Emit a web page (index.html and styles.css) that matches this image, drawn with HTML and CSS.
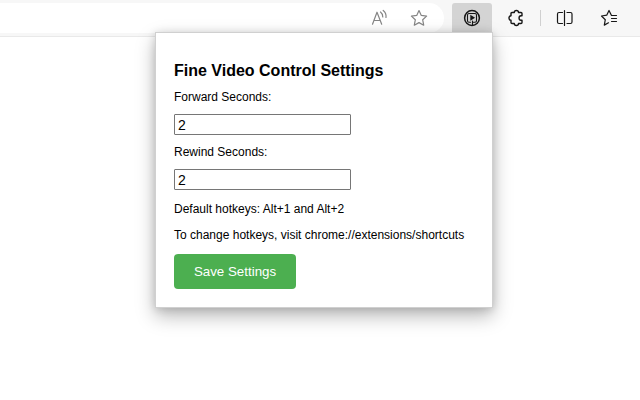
FILE: index.html
```
<!DOCTYPE html>
<html lang="en">
<head>
<meta charset="utf-8">
<title>Fine Video Control Settings</title>
<link rel="stylesheet" href="styles.css">
</head>
<body>
<header class="toolbar">
  <div class="address">
    <svg class="icon muted" width="20" height="20" viewBox="0 0 20 20"><path d="M3.500 16.200 8 4.200l4.700 12M5 12.500h6.200M11.500 4q2.300 1.700 2.300 5M14.200 2.500q3.300 2.700 2.800 7"/></svg>
    <svg class="icon muted" width="20" height="20" viewBox="0 0 20 20"><path d="m10 2.500 2.300 4.900 5.300.7-3.900 3.700 1 5.400-4.700-2.600-4.700 2.600 1-5.400-3.900-3.700 5.300-.7z"/></svg>
  </div>
  <div class="extension">
    <svg class="icon player" width="20" height="20" viewBox="0 0 20 20"><circle cx="10" cy="10" r="7.400"/><path class="thin" d="M8.500 14.200H7q-1.500 0-1.500-1.500V7q0-1.500 1.500-1.500h6q1.500 0 1.500 1.500v5.700q0 1.500-1.500 1.500h-1.500M10.500 13v3.500"/><path class="solid" d="m8.300 6.800 4.800 3-4.800 3z"/></svg>
  </div>
  <nav class="actions">
    <svg class="icon puzzle" width="20" height="20" viewBox="0 0 20 20"><path d="M6 4.500h2.300c0-2.700 4.200-2.700 4.200 0H15q1 0 1 1v2.300h-1c-2.600 0-2.600 4.400 0 4.400h1v2.300q0 1-1 1h-2.500c0 2.700-4.200 2.700-4.200 0H6q-1 0-1-1v-2.300c-2.700 0-2.700-4.400 0-4.400V5.500q0-1 1-1z"/></svg>
    <span class="divider"></span>
    <svg class="icon" width="20" height="20" viewBox="0 0 20 20"><path d="M7.500 4.500H4q-1.500 0-1.500 1.500v8q0 1.500 1.500 1.500h3.500M12 4.500h3.500q1.500 0 1.500 1.500v8q0 1.500-1.500 1.500H12M9.500 2.500v15"/></svg>
    <svg class="icon" width="20" height="20" viewBox="0 0 20 20"><path d="M17.500 7.500h-5L10 2.500 7.700 7.200l-5.200.8 3.800 3.700-1 5.400 4.200-2.300M12.500 10.500h5M12.500 13.500h5"/></svg>
  </nav>
</header>
<main class="popup">
  <h1 class="title">Fine Video Control Settings</h1>
  <label class="label" for="forward">Forward Seconds:</label>
  <input class="field" id="forward" type="text" value="2">
  <label class="label" for="rewind">Rewind Seconds:</label>
  <input class="field" id="rewind" type="text" value="2">
  <p class="note">Default hotkeys: Alt+1 and Alt+2</p>
  <p class="note">To change hotkeys, visit chrome://extensions/shortcuts</p>
  <button class="save">Save Settings</button>
</main>
</body>
</html>
```
FILE: styles.css
```
* { box-sizing: border-box; }
body {
  margin: 0;
  height: 400px;
  overflow: hidden;
  background: #fff;
  color: #000;
  font-family: "Liberation Sans", Arial, sans-serif;
  font-size: 12px;
}
.toolbar {
  display: flex;
  height: 37px;
  padding-top: 3px;
  background: #f7f7f7;
  border-bottom: 1px solid #e9e9e9;
}
.address {
  display: flex;
  justify-content: flex-end;
  align-items: center;
  gap: 20px;
  width: 444px;
  height: 30px;
  padding-right: 15px;
  background: #fff;
  border-radius: 0 15px 15px 0;
}
.extension {
  display: flex;
  justify-content: center;
  align-items: center;
  width: 40px;
  height: 30px;
  margin-left: 8px;
  background: #d4d4d4;
  border-radius: 3px 3px 0 0;
}
.actions {
  display: flex;
  align-items: center;
  height: 30px;
  margin-left: 14px;
}
.icon {
  fill: none;
  stroke: #171717;
  stroke-width: 1.2;
  stroke-linecap: round;
  stroke-linejoin: round;
}
.muted { stroke: #858585; stroke-width: 1.2; }
.player { stroke-width: 1.5; }
.puzzle { stroke-width: 1.4; }
.thin { stroke-width: 1.1; }
.solid { fill: #171717; stroke: none; }
.divider {
  width: 1px;
  height: 16px;
  margin: 0 14px;
  background: #d0d0d0;
}
.divider + .icon { margin-right: 24px; }
.popup {
  position: absolute;
  left: 155px;
  top: 32px;
  width: 338px;
  height: 276px;
  padding: 29px 18px 0;
  background: #fff;
  border: 1px solid #d0d0d0;
  box-shadow: 0 8px 18px rgba(0, 0, 0, .28), 0 1px 8px rgba(0, 0, 0, .14);
}
.title {
  margin: 0 0 10px;
  font-size: 16px;
  line-height: 18px;
}
.label {
  display: block;
  height: 14px;
  line-height: 14px;
  margin-bottom: 10px;
}
.field {
  display: block;
  width: 177px;
  height: 21px;
  margin: 0 0 10px;
  padding: 1px 3px;
  border: 1px solid #767676;
  border-radius: 1px;
  font: 14px "Liberation Sans", Arial, sans-serif;
}
.note {
  margin: 0 0 12px;
  line-height: 14px;
}
.field + .note { margin-top: 12px; }
.save {
  display: block;
  width: 122px;
  height: 35px;
  padding: 0;
  border: 0;
  border-radius: 4px;
  background: #4caf50;
  color: #fff;
  font: 13.333px "Liberation Sans", Arial, sans-serif;
}
```
